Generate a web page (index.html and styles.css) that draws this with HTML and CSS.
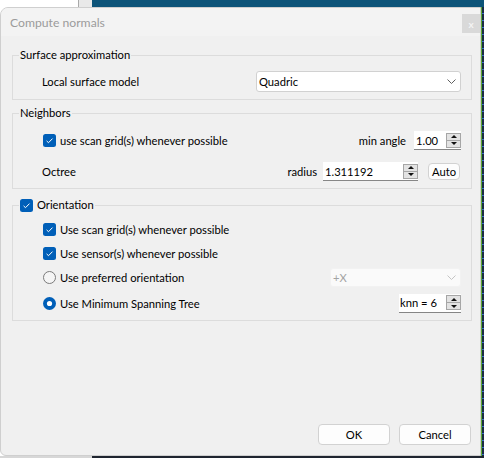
FILE: index.html
```html
<!DOCTYPE html>
<html>
<head>
<meta charset="utf-8">
<link rel="stylesheet" href="styles.css">
</head>
<body>
<div class="screen">
  <div class="topstrip">
    <div class="seg-white"></div><div class="seg-line"></div><div class="seg-gray"></div><div class="seg-blue"></div>
  </div>
  <div class="middle">
    <div class="dialog">
      <div class="titlebar">
        <span class="title">Compute normals</span>
        <span class="close">x</span>
      </div>
      <div class="content">
        <fieldset class="group g1">
          <legend>Surface approximation</legend>
          <div class="rows">
            <div class="row h21">
              <span class="label">Local surface model</span>
              <div class="combo wide">
                <span>Quadric</span>
                <svg class="chev" width="9" height="5" viewBox="0 0 9 5"><path d="M0.5 0.5 L4.5 4.5 L8.5 0.5" fill="none" stroke="#5f5f5f" stroke-width="1"/></svg>
              </div>
            </div>
          </div>
        </fieldset>

        <fieldset class="group g2">
          <legend>Neighbors</legend>
          <div class="rows gap12">
            <div class="row h19">
              <span class="check">
                <svg width="13" height="13" viewBox="0 0 13 13"><rect x="0" y="0" width="13" height="13" rx="2.5" fill="#005fb8"/><path d="M3.6 6.9 L5.5 8.7 L9.5 4.6" fill="none" stroke="#ffffff" stroke-width="1"/></svg>
                <span class="ctext">use scan grid(s) whenever possible</span>
              </span>
              <span class="spacer"></span>
              <span class="label">min angle</span>
              <div class="spin w47 ml8">
                <span class="val">1.00</span>
                <span class="arrows"><span class="up"></span><span class="down"></span></span>
              </div>
            </div>
            <div class="row h19">
              <span class="label">Octree</span>
              <span class="spacer"></span>
              <span class="label">radius</span>
              <div class="spin w95 ml6">
                <span class="val">1.311192</span>
                <span class="arrows"><span class="up"></span><span class="down"></span></span>
              </div>
              <button class="btn auto">Auto</button>
            </div>
          </div>
        </fieldset>

        <fieldset class="group g3">
          <legend>
            <span class="check">
              <svg width="13" height="13" viewBox="0 0 13 13"><rect x="0" y="0" width="13" height="13" rx="2.5" fill="#005fb8"/><path d="M3.6 6.9 L5.5 8.7 L9.5 4.6" fill="none" stroke="#ffffff" stroke-width="1"/></svg>
              <span class="ctext">Orientation</span>
            </span>
          </legend>
          <div class="rows g3rows">
            <div class="row h18">
              <span class="check">
                <svg width="13" height="13" viewBox="0 0 13 13"><rect x="0" y="0" width="13" height="13" rx="2.5" fill="#005fb8"/><path d="M3.6 6.9 L5.5 8.7 L9.5 4.6" fill="none" stroke="#ffffff" stroke-width="1"/></svg>
                <span class="ctext">Use scan grid(s) whenever possible</span>
              </span>
            </div>
            <div class="row h18">
              <span class="check">
                <svg width="13" height="13" viewBox="0 0 13 13"><rect x="0" y="0" width="13" height="13" rx="2.5" fill="#005fb8"/><path d="M3.6 6.9 L5.5 8.7 L9.5 4.6" fill="none" stroke="#ffffff" stroke-width="1"/></svg>
                <span class="ctext">Use sensor(s) whenever possible</span>
              </span>
            </div>
            <div class="row h18">
              <span class="check">
                <svg width="13" height="13" viewBox="0 0 13 13"><circle cx="6.5" cy="6.5" r="6" fill="#f5f5f5" stroke="#7a7a7a" stroke-width="1"/></svg>
                <span class="ctext">Use preferred orientation</span>
              </span>
              <span class="spacer"></span>
              <div class="combo disabled w131">
                <span>+X</span>
                <svg class="chev" width="9" height="5" viewBox="0 0 9 5"><path d="M0.5 0.5 L4.5 4.5 L8.5 0.5" fill="none" stroke="#c4c4c4" stroke-width="1"/></svg>
              </div>
            </div>
            <div class="row h18 mt2">
              <span class="check">
                <svg width="13" height="13" viewBox="0 0 13 13"><circle cx="6.5" cy="6.5" r="6.5" fill="#005fb8"/><circle cx="6.5" cy="6.5" r="2.6" fill="#ffffff"/></svg>
                <span class="ctext">Use Minimum Spanning Tree</span>
              </span>
              <span class="spacer"></span>
              <div class="spin w62">
                <span class="val tight">knn = 6</span>
                <span class="arrows"><span class="up"></span><span class="down"></span></span>
              </div>
            </div>
          </div>
        </fieldset>
      </div>
      <div class="footer">
        <button class="btn push">OK</button>
        <button class="btn push">Cancel</button>
      </div>
    </div>
    <div class="rightstrip"></div>
  </div>
  <div class="bottomstrip"></div>
</div>
</body>
</html>
```

FILE: styles.css
```css
* { box-sizing: border-box; }
html, body { margin: 0; padding: 0; }
body {
  width: 484px;
  height: 458px;
  overflow: hidden;
  font-family: Lato, "Noto Sans", sans-serif;
  font-size: 11.2px;
  color: #000;
}
.screen {
  width: 484px;
  height: 458px;
  display: flex;
  flex-direction: column;
  background: linear-gradient(to right, #ffffff 0, #ffffff 78px, #a9a9a9 78px, #a9a9a9 79px, #e9e9e9 79px, #e9e9e9 92px, #0d5479 92px);
}
.topstrip { height: 7px; display: flex; flex: none; }
.seg-white { width: 78px; background: #ffffff; }
.seg-line { width: 1px; background: #a9a9a9; }
.seg-gray { width: 13px; background: #e9e9e9; }
.seg-blue { flex: 1; background: #0d5479; }

.middle { display: flex; height: 449px; flex: none; }
.rightstrip {
  width: 3px;
  background: repeating-linear-gradient(to bottom, #1b2b45 0, #1b2b45 6px, #3a6ec8 6px, #3a6ec8 7px);
  border-left: 1px solid #5aa832;
}
.bottomstrip { flex: 1; background: linear-gradient(to right, #d7d7d7 0, #d7d7d7 92px, #1f2530 92px); }

.dialog {
  width: 481px;
  height: 449px;
  background: #f0f0f0;
  border: 1px solid #cfcfcf;
  border-radius: 8px 0 0 6px;
  display: flex;
  flex-direction: column;
  overflow: hidden;
}
.titlebar {
  height: 28px;
  flex: none;
  background: #f3f3f3;
  display: flex;
  align-items: center;
  justify-content: space-between;
  padding-left: 9px;
}
.title { color: #9b9b9b; font-size: 12.2px; }
.close {
  align-self: flex-start;
  margin-top: 6px;
  width: 18px;
  height: 19px;
  background: #d9d9d9;
  color: #f4f4f4;
  font-size: 10px;
  font-weight: bold;
  display: flex;
  align-items: center;
  justify-content: center;
  line-height: 1;
}

.content {
  padding: 0 8px 0 11px;
  display: flex;
  flex-direction: column;
}
.group {
  margin: 0;
  border: 1px solid #dcdcdc;
  padding: 0 10px 7px 6px;
  min-width: 0;
}
.group legend {
  padding: 0 1px;
  height: 16px;
  line-height: 16px;
  display: flex;
  align-items: center;
}
.g1 { margin-top: 11px; padding-top: 8px; }
.g2 { margin-top: 5px; padding-top: 10px; }
.g3 { margin-top: 8px; padding-top: 7px; padding-bottom: 8px; }

.rows { margin-left: 23px; display: flex; flex-direction: column; }
.gap12 { gap: 12px; }
.g3rows { gap: 6px; }
.row { display: flex; align-items: center; }
.h21 { height: 21px; }
.h19 { height: 19px; }
.h18 { height: 18px; }
.mt2 { margin-top: 2px; }
.spacer { flex: 1; }
.label { white-space: nowrap; }

.check { display: inline-flex; align-items: center; gap: 4px; white-space: nowrap; }
.rows .check { margin-left: 1px; }
.check svg { flex: none; display: block; }

.combo {
  height: 21px;
  background: #ffffff;
  border: 1px solid #d1d1d1;
  border-radius: 3px;
  display: flex;
  align-items: center;
  justify-content: space-between;
  padding: 0 4px 0 2px;
  margin-left: auto;
}
.combo.wide { width: 205px; }
.combo.w131 { width: 131px; height: 19px; }
.combo.disabled { background: #fafafa; border-color: #f2f2f2; color: #a3a3a3; }
.chev { display: block; }

.spin {
  height: 19px;
  background: #ffffff;
  border-bottom: 1px solid #868686;
  display: flex;
  align-items: center;
  justify-content: space-between;
  padding-left: 2px;
}
.w47 { width: 47px; }
.w95 { width: 95px; }
.w62 { width: 62px; }
.ml8 { margin-left: 8px; }
.ml6 { margin-left: 6px; }
.val { white-space: nowrap; }
.val.tight { margin-left: -1px; }
.arrows {
  width: 15px;
  height: 15px;
  border: 1px solid #a6a6a6;
  background: #e3e3e3;
  display: flex;
  flex-direction: column;
}
.arrows .up, .arrows .down {
  flex: 1;
  display: flex;
  align-items: center;
  justify-content: center;
}
.arrows .up { border-bottom: 1px solid #a6a6a6; }
.arrows .up::before {
  content: "";
  border-left: 3px solid transparent;
  border-right: 3px solid transparent;
  border-bottom: 3px solid #111;
}
.arrows .down::before {
  content: "";
  border-left: 3px solid transparent;
  border-right: 3px solid transparent;
  border-top: 3px solid #111;
}

.btn {
  font-family: inherit;
  font-size: inherit;
  color: #000;
  background: #fdfdfd;
  border: 1px solid #d2d2d2;
  border-radius: 4px;
  padding: 0;
}
.btn.auto { width: 32px; height: 17px; margin-left: 10px; margin-right: 1px; line-height: 1; }
.footer {
  margin-top: auto;
  display: flex;
  justify-content: flex-end;
  gap: 9px;
  padding: 0 9px 10px 0;
}
.btn.push { width: 72px; height: 21px; }
```
